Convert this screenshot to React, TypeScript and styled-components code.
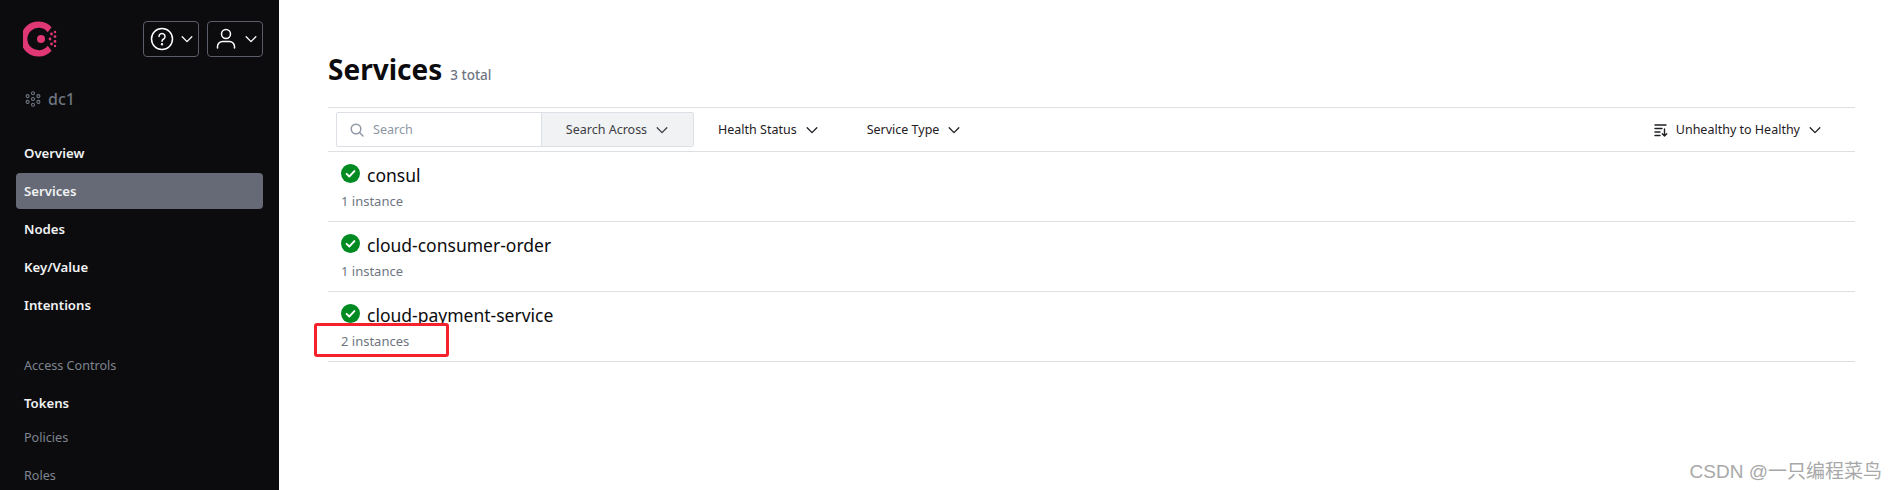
import React from "react";
import styled, { createGlobalStyle } from "styled-components";

const GlobalStyle = createGlobalStyle`
    html, body {
        margin: 0;
        height: 100%;
        overflow: hidden;
        background: #fff;
        font-family: "Noto Sans", "Open Sans", sans-serif;
    }
`;

const Page = styled.div`
    display: flex;
    position: relative;
    height: 490px;
    overflow: hidden;
`;

const Sidebar = styled.aside`
    width: 279px;
    flex: none;
    background: #0c0c0e;
    padding: 21px 16px 0;
    box-sizing: border-box;
`;

const SideTop = styled.div`
    display: flex;
    align-items: center;
    height: 36px;
    padding-left: 7px;
`;

const MenuButton = styled.div<{ $first?: boolean }>`
    display: flex;
    align-items: center;
    justify-content: space-between;
    box-sizing: border-box;
    width: 56px;
    height: 36px;
    margin-left: ${(p) => (p.$first ? "auto" : "8px")};
    padding: 0 4px 0 6px;
    border: 1px solid #5a5e68;
    border-radius: 4px;
    color: #fff;
`;

const Datacenter = styled.div`
    display: flex;
    align-items: center;
    gap: 7px;
    height: 24px;
    margin: 30px 0 24px 9px;
    color: #6f7682;
    font-size: 16px;
    font-weight: 500;
`;

const NavItem = styled.div<{ $active?: boolean; $muted?: boolean; $gap?: number }>`
    display: flex;
    align-items: center;
    box-sizing: border-box;
    height: 36px;
    margin-bottom: ${(p) => p.$gap ?? 2}px;
    padding-left: 8px;
    border-radius: 4px;
    font-size: ${(p) => (p.$muted ? "12.6px" : "13.2px")};
    font-weight: ${(p) => (p.$muted ? 400 : 600)};
    color: ${(p) => (p.$muted ? "#7e8590" : "#f1f2f3")};
    background: ${(p) => (p.$active ? "#656a76" : "transparent")};
`;

const NavHeading = styled(NavItem)`
    margin-top: 24px;
`;

const Main = styled.main`
    flex: 1;
    padding: 0 42px 0 49px;
`;

const TitleRow = styled.header`
    display: flex;
    align-items: flex-start;
    gap: 8px;
    height: 107px;
    box-sizing: border-box;
    padding-top: 48px;
`;

const Title = styled.h1`
    margin: 0;
    font-size: 28px;
    line-height: 42px;
    font-weight: 700;
    color: #0c0c0e;
`;

const Total = styled.span`
    margin-top: 18px;
    font-size: 13.5px;
    line-height: 18px;
    color: #6f7682;
    font-weight: 500;
`;

const Toolbar = styled.div`
    display: flex;
    align-items: center;
    height: 45px;
    box-sizing: border-box;
    padding: 0 33px 0 8px;
    border-top: 1px solid #dedfe2;
    border-bottom: 1px solid #dedfe2;
`;

const SearchGroup = styled.div`
    display: flex;
    width: 358px;
    height: 35px;
    box-sizing: border-box;
    border: 1px solid #dce0e6;
    border-radius: 2px;
`;

const SearchField = styled.div`
    display: flex;
    align-items: center;
    gap: 9px;
    width: 205px;
    padding-left: 13px;
    box-sizing: border-box;
    color: #8e96a3;
    font-size: 12.6px;
    border-right: 1px solid #dce0e6;
`;

const SearchAcross = styled.div`
    flex: 1;
    display: flex;
    align-items: center;
    justify-content: center;
    gap: 8px;
    background: #f1f2f3;
    color: #3b3d45;
    font-size: 12.5px;
`;

const FilterButton = styled.div<{ $offset: number }>`
    display: flex;
    align-items: center;
    gap: 8px;
    margin-left: ${(p) => p.$offset}px;
    color: #1f2024;
    font-size: 12.5px;
`;

const SortButton = styled(FilterButton)`
    margin-left: auto;
`;

const ServiceRow = styled.div`
    height: 70px;
    box-sizing: border-box;
    padding: 11px 0 0 13px;
    border-bottom: 1px solid #dedfe2;
`;

const ServiceName = styled.div`
    display: flex;
    align-items: center;
    gap: 7px;
    height: 24px;
    color: #0c0c0e;
    font-size: 17.5px;
    font-weight: 400;
`;

const InstanceCount = styled.div`
    margin-top: 3px;
    color: #6f7682;
    font-size: 13px;
    line-height: 22px;
`;

const HealthySvg = styled.svg`
    margin-top: -4px;
`;

const Highlight = styled.div`
    position: absolute;
    left: 314px;
    top: 323px;
    width: 135px;
    height: 34px;
    box-sizing: border-box;
    border: 3px solid #f5222d;
    border-radius: 3px;
`;

const Watermark = styled.div`
    position: absolute;
    right: 15px;
    top: 461px;
    color: #a8a8a8;
    font-family: "Liberation Sans", "Noto Sans CJK SC", sans-serif;
    font-size: 19px;
    line-height: 22px;
`;

const Chevron = ({ size = 16 }: { size?: number }) => (
    <svg width={size} height={size} viewBox="0 0 16 16" fill="none">
        <path d="M2.5 5.5 8 11l5.5-5.5" stroke="currentColor" strokeWidth="1.5" strokeLinecap="round" strokeLinejoin="round" />
    </svg>
);

const ConsulLogo = () => (
    <svg width="38" height="36" viewBox="0 0 38 36" fill="#e03875">
        <path d="M28.6 6.3A17.6 17.6 0 1 0 28.6 29.7L24.7 24.8A11.3 11.3 0 1 1 24.7 11.2Z" />
        <circle cx="18" cy="18" r="4" />
        <circle cx="28.5" cy="13" r="1.4" />
        <circle cx="28.5" cy="23" r="1.4" />
        <circle cx="27" cy="18" r="1.4" />
        <circle cx="32" cy="15.6" r="1.4" />
        <circle cx="32" cy="20.4" r="1.4" />
        <circle cx="32" cy="11" r="1.2" />
        <circle cx="32" cy="25" r="1.2" />
    </svg>
);

const HelpIcon = () => (
    <svg width="24" height="24" viewBox="0 0 24 24" fill="none" stroke="currentColor" strokeWidth="1.5" strokeLinecap="round">
        <circle cx="12" cy="12" r="10.5" />
        <path d="M9 9.4a3 3 0 1 1 4.6 2.6c-1 .6-1.6 1.2-1.6 2.3" />
        <circle cx="12" cy="17.2" r=".5" />
    </svg>
);

const UserIcon = () => (
    <svg width="24" height="24" viewBox="0 0 24 24" fill="none" stroke="currentColor" strokeWidth="1.5" strokeLinecap="round">
        <circle cx="12" cy="7" r="4.5" />
        <path d="M3.5 21v-1.5a5 5 0 0 1 5-5h7a5 5 0 0 1 5 5V21" />
    </svg>
);

const ClusterIcon = () => (
    <svg width="16" height="16" viewBox="0 0 16 16" fill="none" stroke="#6f7682" strokeWidth="1.1">
        <circle cx="8" cy="2.2" r="1.5" />
        <circle cx="8" cy="13.8" r="1.5" />
        <circle cx="2.6" cy="5.1" r="1.5" />
        <circle cx="13.4" cy="5.1" r="1.5" />
        <circle cx="2.6" cy="10.9" r="1.5" />
        <circle cx="13.4" cy="10.9" r="1.5" />
        <circle cx="8" cy="8" r="1.5" />
    </svg>
);

const SearchIcon = () => (
    <svg width="14" height="14" viewBox="0 0 14 14" fill="none" stroke="#8e96a3" strokeWidth="1.4" strokeLinecap="round">
        <circle cx="6" cy="6" r="4.8" />
        <path d="m9.6 9.6 3.4 3.4" />
    </svg>
);

const SortIcon = () => (
    <svg width="14" height="14" viewBox="0 0 14 14" fill="none" stroke="#1f2024" strokeWidth="1.4" strokeLinecap="round" strokeLinejoin="round">
        <path d="M1 2h11M1 5.5h7M1 9h5M1 12.5h5" />
        <path d="M10.5 6v7M8.3 10.8l2.2 2.2 2.2-2.2" />
    </svg>
);

const HealthyIcon = () => (
    <HealthySvg width="19" height="19" viewBox="0 0 19 19">
        <circle cx="9.5" cy="9.5" r="9.5" fill="#008a22" />
        <path d="m5.6 9.8 2.7 2.7 5.1-5.4" fill="none" stroke="#fff" strokeWidth="1.9" strokeLinecap="round" strokeLinejoin="round" />
    </HealthySvg>
);

const services = [
    { name: "consul", instances: "1 instance" },
    { name: "cloud-consumer-order", instances: "1 instance" },
    { name: "cloud-payment-service", instances: "2 instances" },
];

const App = () => (
    <Page>
        <GlobalStyle />
        <Sidebar>
            <SideTop>
                <ConsulLogo />
                <MenuButton $first>
                    <HelpIcon />
                    <Chevron size={14} />
                </MenuButton>
                <MenuButton>
                    <UserIcon />
                    <Chevron size={14} />
                </MenuButton>
            </SideTop>
            <Datacenter>
                <ClusterIcon />
                dc1
            </Datacenter>
            <NavItem>Overview</NavItem>
            <NavItem $active>Services</NavItem>
            <NavItem>Nodes</NavItem>
            <NavItem>Key/Value</NavItem>
            <NavItem>Intentions</NavItem>
            <NavHeading $muted>Access Controls</NavHeading>
            <NavItem $gap={-2}>Tokens</NavItem>
            <NavItem $muted>Policies</NavItem>
            <NavItem $muted>Roles</NavItem>
        </Sidebar>
        <Main>
            <TitleRow>
                <Title>Services</Title>
                <Total>3 total</Total>
            </TitleRow>
            <Toolbar>
                <SearchGroup>
                    <SearchField>
                        <SearchIcon />
                        Search
                    </SearchField>
                    <SearchAcross>
                        Search Across
                        <Chevron size={14} />
                    </SearchAcross>
                </SearchGroup>
                <FilterButton $offset={24}>
                    Health Status
                    <Chevron size={14} />
                </FilterButton>
                <FilterButton $offset={48}>
                    Service Type
                    <Chevron size={14} />
                </FilterButton>
                <SortButton $offset={0}>
                    <SortIcon />
                    Unhealthy to Healthy
                    <Chevron size={14} />
                </SortButton>
            </Toolbar>
            {services.map((service) => (
                <ServiceRow key={service.name}>
                    <ServiceName>
                        <HealthyIcon />
                        {service.name}
                    </ServiceName>
                    <InstanceCount>{service.instances}</InstanceCount>
                </ServiceRow>
            ))}
        </Main>
        <Highlight />
        <Watermark>CSDN @一只编程菜鸟</Watermark>
    </Page>
);

export default App;
